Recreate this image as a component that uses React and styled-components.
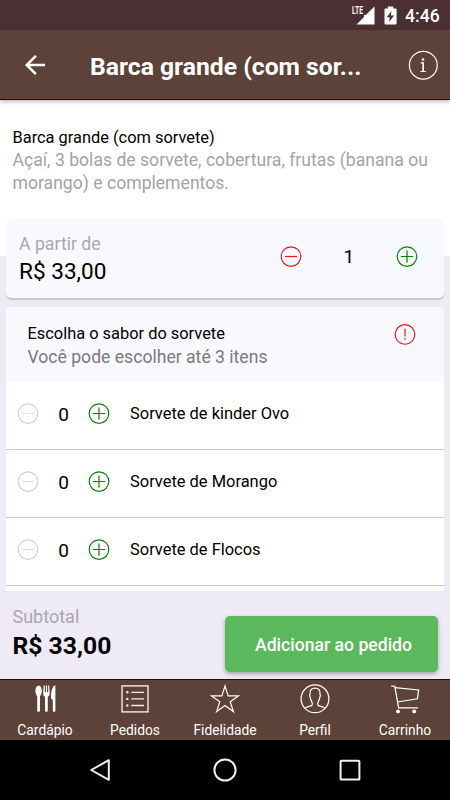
import React, { useState } from 'react';
import styled, { createGlobalStyle } from 'styled-components';

const flavors = ['Sorvete de kinder Ovo', 'Sorvete de Morango', 'Sorvete de Flocos'];

const MinusIcon = ({ color, bar }) => (
  <svg width="22" height="22" viewBox="0 0 22 22" fill="none" stroke={color} strokeWidth="1.15">
    <circle cx="11" cy="10.6" r="9.8" />
    <path d="M5 10.5H17" stroke={bar || color} strokeWidth="1.2" />
  </svg>
);

const PlusIcon = () => (
  <svg width="22" height="22" viewBox="0 0 22 22" fill="none" stroke="#078009" strokeWidth="1.15">
    <circle cx="11" cy="10.6" r="9.8" />
    <path d="M4.8 10.5H17.2M11 4.4V16.8" strokeWidth="1.2" />
  </svg>
);

const AlertIcon = () => (
  <svg width="22" height="22" viewBox="0 0 22 22" fill="none" stroke="#fb1016" strokeWidth="1.15">
    <circle cx="11" cy="11.4" r="9.8" />
    <path d="M11 5.8V13.4" strokeWidth="1.2" />
    <circle cx="11" cy="16" r=".85" fill="#fb1016" stroke="none" />
  </svg>
);

const BackIcon = () => (
  <svg width="30" height="30" viewBox="0 0 24 24" fill="#fff">
    <path d="M20 11H7.83l5.59-5.59L12 4l-8 8 8 8 1.41-1.41L7.83 13H20v-2z" />
  </svg>
);

const InfoIcon = () => (
  <svg width="30" height="30" viewBox="0 0 30 30" fill="none" stroke="#fff">
    <circle cx="15.3" cy="15.2" r="13.9" strokeWidth="1.2" />
    <circle cx="15" cy="9.5" r="1.3" fill="#fff" stroke="none" />
    <path d="M12.6 12.9H15.4V21.4M12.4 21.5H17.8" strokeWidth="1.1" />
    <path d="M15.1 12.4V21.5" strokeWidth="1.5" />
  </svg>
);

const SignalIcon = () => (
  <svg width="23" height="19" viewBox="0 0 23 19" fill="#fff">
    <path d="M22.5 0.5V18.5H4.5L12 11V9H13.8z" />
  </svg>
);

const BatteryIcon = () => (
  <svg width="13" height="19" viewBox="0 0 13 19">
    <path d="M3.8 .5H9.2V2.5H11.6Q12.6 2.5 12.6 3.5V17.3Q12.6 18.5 11.4 18.5H1.7Q.5 18.5 .5 17.3V3.5Q.5 2.5 1.5 2.5H3.8z" fill="#fff" />
    <path d="M7.4 5L2.8 11.2H5.8L5 16L10.2 9.4H6.9z" fill="#4b2f33" />
  </svg>
);

const tabs = [
  {
    label: 'Cardápio',
    icon: (
      <svg width="30" height="30" viewBox="0 0 30 30" fill="#fff">
        <ellipse cx="8.6" cy="7" rx="3.2" ry="5.6" />
        <path d="M7.2 10H10V26.6Q10 28 8.6 28T7.2 26.6z" />
        <path d="M13.7 1.6H14.8V8.2H15.9V1.6H17.1V8.2H18.2V1.6H19.2L19.7 8.5Q19.7 12.2 17.8 12.8V26.6Q17.8 28 16.4 28T15 26.6V12.8Q13.1 12.2 13.1 8.5z" />
        <path d="M25.4 1.4V26.6Q25.4 28 24.1 28T22.8 26.6V16L21 14.6Q20.6 6.4 23.4 2.4Q24.2 1.3 25.4 1.4z" />
      </svg>
    ),
  },
  {
    label: 'Pedidos',
    icon: (
      <svg width="30" height="30" viewBox="0 0 30 30" fill="none" stroke="#f5ecea">
        <rect x="2" y="1.9" width="26" height="26" strokeWidth="1.4" />
        <path d="M11.2 8.3H24M11.2 14.9H24M11.2 21.5H24" strokeWidth="1.3" />
        <g fill="#f5ecea" stroke="none">
          <circle cx="7.3" cy="8.3" r="1.2" />
          <circle cx="7.3" cy="14.9" r="1.2" />
          <circle cx="7.3" cy="21.5" r="1.2" />
        </g>
      </svg>
    ),
  },
  {
    label: 'Fidelidade',
    icon: (
      <svg width="30" height="30" viewBox="0 0 30 30" fill="none" stroke="#fff" strokeWidth="1.2">
        <path d="M15 2L18.2 11.9H28.4L20.2 17.8L23.4 27.6L15 21.5L6.6 27.6L9.8 17.8L1.6 11.9H11.8z" />
      </svg>
    ),
  },
  {
    label: 'Perfil',
    icon: (
      <svg width="30" height="30" viewBox="0 0 30 30" fill="none" stroke="#fff" strokeWidth="1.25">
        <circle cx="15" cy="14.8" r="13.9" />
        <path d="M5.2 24.4C6.6 22.2 11.8 22.6 12.2 20.8C12.5 19.2 12.4 18.4 11.6 17.4C10.5 15.8 10.6 14.4 10.1 13C9.2 12 9.6 11 10 10.4C9.6 6.2 11.4 4.2 15 4.2S20.4 6.2 20 10.4C20.4 11 20.8 12 19.9 13C19.4 14.4 19.5 15.8 18.4 17.4C17.6 18.4 17.5 19.2 17.8 20.8C18.2 22.6 23.4 22.2 24.8 24.4" />
      </svg>
    ),
  },
  {
    label: 'Carrinho',
    icon: (
      <svg width="30" height="30" viewBox="0 0 30 30" fill="none" stroke="#fff" strokeWidth="1.25">
        <path d="M1 2L4.8 2.4L8.6 23.8H28" />
        <path d="M5 3.6L28.6 6L27.4 14.8L7.4 18" />
        <circle cx="8" cy="27.4" r="1.9" fill="#fff" stroke="none" />
        <circle cx="24.2" cy="27.4" r="1.9" fill="#fff" stroke="none" />
      </svg>
    ),
  },
];

function App() {
  const [quantity, setQuantity] = useState(1);

  return (
    <Screen>
      <GlobalStyle />
      <StatusBar>
        <Signal>
          <SignalIcon />
          <span>LTE</span>
        </Signal>
        <BatteryIcon />
        <Clock>4:46</Clock>
      </StatusBar>
      <Header>
        <IconButton><BackIcon /></IconButton>
        <Title>Barca grande (com sor...</Title>
        <IconButton><InfoIcon /></IconButton>
      </Header>
      <Content>
        <Description>
          <h2>Barca grande (com sorvete)</h2>
          <p>Açaí, 3 bolas de sorvete, cobertura, frutas (banana ou</p>
          <p>morango) e complementos.</p>
        </Description>
        <PriceCard>
          <div>
            <Label>A partir de</Label>
            <Price>R$ 33,00</Price>
          </div>
          <Stepper>
            <IconButton onClick={() => setQuantity(Math.max(1, quantity - 1))}>
              <MinusIcon color="#fb1016" />
            </IconButton>
            <span>{quantity}</span>
            <IconButton onClick={() => setQuantity(quantity + 1)}>
              <PlusIcon />
            </IconButton>
          </Stepper>
        </PriceCard>
        <OptionsCard>
          <OptionsHeader>
            <div>
              <h3>Escolha o sabor do sorvete</h3>
              <p>Você pode escolher até 3 itens</p>
            </div>
            <AlertIcon />
          </OptionsHeader>
          {flavors.map((flavor) => (
            <OptionRow key={flavor}>
              <MinusIcon color="#cfcfcf" bar="#dedede" />
              <Count>0</Count>
              <PlusIcon />
              <Flavor>{flavor}</Flavor>
            </OptionRow>
          ))}
        </OptionsCard>
      </Content>
      <Footer>
        <div>
          <Label $size="18px">Subtotal</Label>
          <Total>R$ 33,00</Total>
        </div>
        <AddButton>Adicionar ao pedido</AddButton>
      </Footer>
      <TabBar>
        {tabs.map((tab) => (
          <Tab key={tab.label}>
            {tab.icon}
            <span>{tab.label}</span>
          </Tab>
        ))}
      </TabBar>
      <SystemNav>
        <svg width="24" height="24" viewBox="0 0 24 24">
          <path d="M20.8 2.2V21.8L3.2 12z" />
        </svg>
        <svg width="24" height="24" viewBox="0 0 24 24">
          <circle cx="12" cy="12" r="10.6" />
        </svg>
        <svg width="24" height="24" viewBox="0 0 24 24">
          <rect x="2.6" y="2.8" width="18.8" height="18.8" rx=".6" />
        </svg>
      </SystemNav>
    </Screen>
  );
}

export default App;

const GlobalStyle = createGlobalStyle`
  * {
    box-sizing: border-box;
  }

  body {
    margin: 0;
  }

  h1, h2, h3, p {
    margin: 0;
    font-weight: 400;
  }

  svg {
    display: block;
    flex-shrink: 0;
  }
`;

const Screen = styled.div`
  width: 450px;
  height: 800px;
  display: flex;
  flex-direction: column;
  overflow: hidden;
  font-family: Roboto, sans-serif;
  color: #000;
  background: #eeeaf6;
  white-space: nowrap;
`;

const StatusBar = styled.div`
  height: 30px;
  flex-shrink: 0;
  display: flex;
  align-items: center;
  justify-content: flex-end;
  padding-right: 10px;
  background: #4b2f33;
  color: #fff;
`;

const Signal = styled.div`
  position: relative;
  margin-right: 9px;

  /* network type sits over the empty corner of the signal triangle */
  span {
    position: absolute;
    left: 0;
    top: 0;
    font-size: 10.5px;
    line-height: 9px;
    font-weight: 700;
    transform: scaleX(0.65);
    transform-origin: left;
  }
`;

const Clock = styled.div`
  width: 35px;
  margin-left: 8px;
  padding-top: 1px;
  font-size: 17.6px;
  line-height: 30px;
  font-weight: 500;
`;

const Header = styled.header`
  position: relative;
  z-index: 1;
  height: 70px;
  flex-shrink: 0;
  display: flex;
  align-items: center;
  padding: 0 12px 0 20px;
  background: #5c4239;
  border-bottom: 1px solid #2c0a06;
  box-shadow: 0 2px 4px rgba(0, 0, 0, 0.25);
  color: #fff;
`;

const IconButton = styled.button`
  padding: 0;
  border: 0;
  background: none;
  cursor: pointer;
`;

const Title = styled.h1`
  flex: 1;
  margin-left: 40px;
  padding-top: 5px;
  font-size: 24.7px;
  line-height: 30px;
  font-weight: 700;
`;

const Content = styled.main`
  height: 491px;
  flex-shrink: 0;
  padding: 0 6px;
  overflow: hidden;
  background: linear-gradient(#fff 156px, #eeeaf6 156px);
`;

const Description = styled.section`
  height: 119px;
  padding: 26px 0 0 6.5px;

  h2 {
    font-size: 16.4px;
    line-height: 23px;
  }

  p {
    font-size: 17.6px;
    line-height: 23px;
    color: #a5a3a5;
  }
`;

const PriceCard = styled.section`
  height: 79px;
  display: flex;
  justify-content: space-between;
  padding: 13px 26.5px 0 13px;
  border-radius: 5px;
  background: #f8f8ff;
  box-shadow: 0 2px 1px #c8c8c8;
`;

const Label = styled.div`
  font-size: ${(props) => props.$size || '17.7px'};
  line-height: 25px;
  color: #a9a7aa;
`;

const Price = styled.div`
  font-size: 22.6px;
  line-height: 30px;
`;

const Stepper = styled.div`
  display: flex;
  justify-content: space-between;
  align-items: center;
  width: 137.5px;
  height: 49px;
  font-size: 19px;
`;

const OptionsCard = styled.section`
  height: 285px;
  margin-top: 9px;
  border-radius: 3px 3px 0 0;
  overflow: hidden;
  background: #fff;
`;

const OptionsHeader = styled.div`
  height: 75px;
  display: flex;
  justify-content: space-between;
  padding: 16px 28px 0 21.5px;
  background: #f8f8ff;

  h3 {
    font-size: 16.4px;
    line-height: 22px;
  }

  p {
    font-size: 17.6px;
    line-height: 24px;
    color: #7b797c;
  }
`;

const OptionRow = styled.div`
  height: 68px;
  display: flex;
  align-items: center;
  padding: 0 0 4px 11px;
  border-bottom: 1px solid #c8c8c8;
`;

const Count = styled.div`
  width: 49px;
  padding-top: 2px;
  text-align: center;
  font-size: 19px;
  line-height: 22px;
`;

const Flavor = styled.div`
  margin-left: 20px;
  font-size: 16.45px;
  line-height: 22px;
`;

const Footer = styled.footer`
  height: 88px;
  flex-shrink: 0;
  display: flex;
  justify-content: space-between;
  align-items: flex-start;
  padding: 13px 12px 0 12.5px;
`;

const Total = styled.div`
  padding-top: 1px;
  font-size: 24.7px;
  line-height: 32px;
  font-weight: 700;
`;

const AddButton = styled.button`
  width: 213px;
  height: 56px;
  margin-top: 12px;
  padding: 2px 0 0 4px;
  border: 0;
  border-radius: 5px;
  background: #5cb85c;
  box-shadow: 0 2px 4px rgba(0, 0, 0, 0.3);
  color: #fff;
  font-family: inherit;
  font-size: 17.6px;
  font-weight: 500;
  cursor: pointer;
`;

const TabBar = styled.nav`
  height: 61px;
  flex-shrink: 0;
  display: flex;
  background: #5c4239;
  border-top: 1px solid #2c0a06;
`;

const Tab = styled.div`
  flex: 1;
  display: flex;
  flex-direction: column;
  align-items: center;
  padding-top: 4px;
  color: #fff;

  span {
    margin-top: 6px;
    font-size: 13.8px;
    line-height: 20px;
  }
`;

const SystemNav = styled.div`
  height: 60px;
  flex-shrink: 0;
  display: flex;
  justify-content: center;
  align-items: center;
  gap: 101px;
  background: #000;

  svg {
    fill: none;
    stroke: #f3eef6;
    stroke-width: 2;
    stroke-linejoin: round;
  }
`;
